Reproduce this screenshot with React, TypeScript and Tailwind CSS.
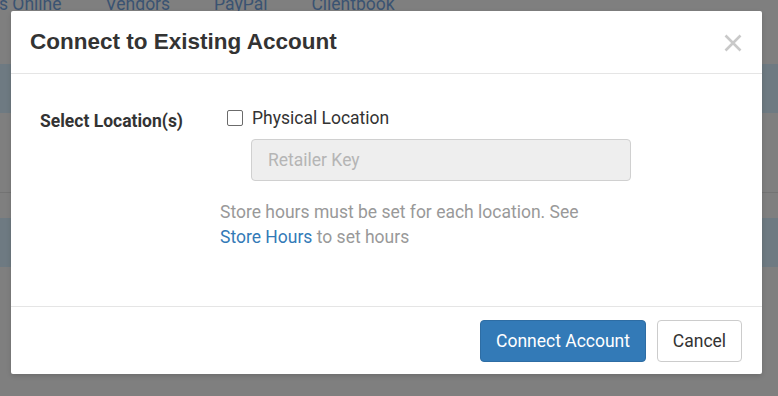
import React from 'react';

const body = { fontFamily: 'Roboto, "Liberation Sans", Arial, sans-serif' };
const heading = { fontFamily: '"Liberation Sans", Arial, Helvetica, sans-serif' };

const navItems = ['s Online', 'Vendors', 'PayPal', 'Clientbook'];

const App: React.FC = () => {
  return (
    <div className="relative w-[778px] h-[396px] overflow-hidden bg-[#7f7f7f]" style={body}>
      {/* dimmed page behind the modal */}
      <div className="flex flex-col">
        <div className="h-[64px] flex gap-[44px] -ml-[1px] text-[17.5px] leading-[24px] text-[#3a5372] -mt-[8px]">
          {navItems.map((n) => (
            <span key={n}>{n}</span>
          ))}
        </div>
        <div className="h-[8px]" />
        <div className="h-[49px] bg-[#6e7a82]" />
        <div className="h-[79px]" />
        <div className="h-px bg-[#737373]" />
        <div className="h-[25px]" />
        <div className="h-[49px] bg-[#6e7a82]" />
      </div>

      {/* modal */}
      <div className="absolute left-[11px] top-[11px] w-[751px] h-[363px] bg-white rounded-[2px] flex flex-col shadow-[0_2px_5px_rgba(0,0,0,0.15)]">
        <div className="h-[63px] flex items-center justify-between pl-[19px] pr-[20px] border-b border-[#e5e5e5]">
          <h4 className="text-[22.5px] font-bold text-[#333] leading-none" style={heading}>
            Connect to Existing Account
          </h4>
          <svg width="18" height="18" viewBox="0 0 18 18" className="mt-[1px]">
            <path d="M1.5 1.5 L16.5 16.5 M16.5 1.5 L1.5 16.5" stroke="#c9c9c9" strokeWidth="2.6" strokeLinecap="butt" />
          </svg>
        </div>

        <div className="flex-1 flex pl-[29px] pt-[32px]">
          <div className="w-[180px] pt-[3px]">
            <label className="text-[17.5px] leading-[24px] font-bold text-[#333]">Select Location(s)</label>
          </div>
          <div className="flex flex-col">
            <div className="flex items-center ml-[7px] h-[24px]">
              <span className="w-[16px] h-[16px] border border-[#6b6b6b] rounded-[2px] bg-white" />
              <span className="ml-[9px] text-[17.5px] leading-[24px] text-[#333]">Physical Location</span>
            </div>
            <div className="ml-[31px] mt-[9px] w-[380px] h-[42px] bg-[#eeeeee] border border-[#d0d0d0] rounded-[4px] flex items-center px-[16px] pt-[1px] text-[17.5px] text-[#b5b5b5]">
              Retailer Key
            </div>
            <p className="mt-[19px] text-[17.5px] leading-[25px] text-[#999]">
              Store hours must be set for each location. See
              <br />
              <span className="text-[#337ab7]">Store Hours</span> to set hours
            </p>
          </div>
        </div>

        <div className="h-[68px] border-t border-[#e5e5e5] flex justify-end items-start pt-[13px] pr-[20px] gap-[11px]">
          <button className="h-[42px] w-[166px] rounded-[4px] bg-[#337ab7] border border-[#2e6da4] text-white text-[17.5px]">
            Connect Account
          </button>
          <button className="h-[42px] w-[85px] rounded-[4px] bg-white border border-[#cccccc] text-[#333] text-[17.5px]">
            Cancel
          </button>
        </div>
      </div>
    </div>
  );
};

export default App;
